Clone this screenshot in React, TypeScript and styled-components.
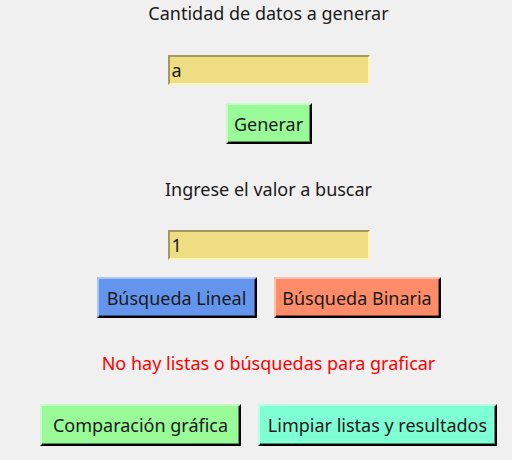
import styled, {createGlobalStyle} from "styled-components";

const GlobalStyle = createGlobalStyle`
  html, body {
    margin: 0;
    padding: 0;
    background: #f0f0f0;
    overflow: hidden;
  }
`;

const Window = styled.div`
  width: 512px;
  height: 460px;
  box-sizing: border-box;
  padding-left: 25px;
  display: flex;
  flex-direction: column;
  align-items: center;
  background: #f0f0f0;
  font-family: "Noto Sans", "Open Sans", sans-serif;
  font-size: 18px;
  color: #1a1a1a;
`;

const Label = styled.div<{ $top: number; $color?: string }>`
  margin-top: ${p => p.$top}px;
  height: 24px;
  line-height: 24px;
  white-space: nowrap;
  color: ${p => p.$color || "#1a1a1a"};
`;

const Entry = styled.input<{ $top: number }>`
  margin-top: ${p => p.$top}px;
  width: 202px;
  height: 30px;
  box-sizing: border-box;
  padding: 0 2px;
  font: inherit;
  color: #1a1a1a;
  background: #eedd82;
  border: 2px solid;
  border-color: #a39a5b #fff4b4 #fff4b4 #a39a5b;
  outline: none;
`;

const Row = styled.div<{ $top: number }>`
  margin-top: ${p => p.$top}px;
  display: flex;
  gap: 17px;
`;

const Button = styled.button<{ $bg: string; $w: number; $h: number; $top?: number }>`
  margin-top: ${p => p.$top || 0}px;
  width: ${p => p.$w}px;
  height: ${p => p.$h}px;
  box-sizing: border-box;
  padding: 0;
  font: inherit;
  color: #1a1a1a;
  white-space: nowrap;
  background: ${p => p.$bg};
  border: 2px solid;
  border-color: color-mix(in srgb, ${p => p.$bg} 55%, white) #000 #000 color-mix(in srgb, ${p => p.$bg} 55%, white);
  box-shadow: inset -1px -1px color-mix(in srgb, ${p => p.$bg} 55%, black);
  cursor: pointer;
`;

export default function App() {
    return (
        <>
            <GlobalStyle/>
            <Window>
                <Label $top={1}>Cantidad de datos a generar</Label>
                <Entry $top={30} defaultValue="a"/>
                <Button $top={18} $w={86} $h={41} $bg="#98fb98">Generar</Button>
                <Label $top={33}>Ingrese el valor a buscar</Label>
                <Entry $top={29} defaultValue="1"/>
                <Row $top={17}>
                    <Button $w={160} $h={41} $bg="#6495ed">Búsqueda Lineal</Button>
                    <Button $w={167} $h={41} $bg="#ff8c69">Búsqueda Binaria</Button>
                </Row>
                <Label $top={33} $color="#ff0000">No hay listas o búsquedas para graficar</Label>
                <Row $top={29}>
                    <Button $w={201} $h={42} $bg="#98fb98">Comparación gráfica</Button>
                    <Button $w={239} $h={42} $bg="#7fffd4">Limpiar listas y resultados</Button>
                </Row>
            </Window>
        </>
    );
}
